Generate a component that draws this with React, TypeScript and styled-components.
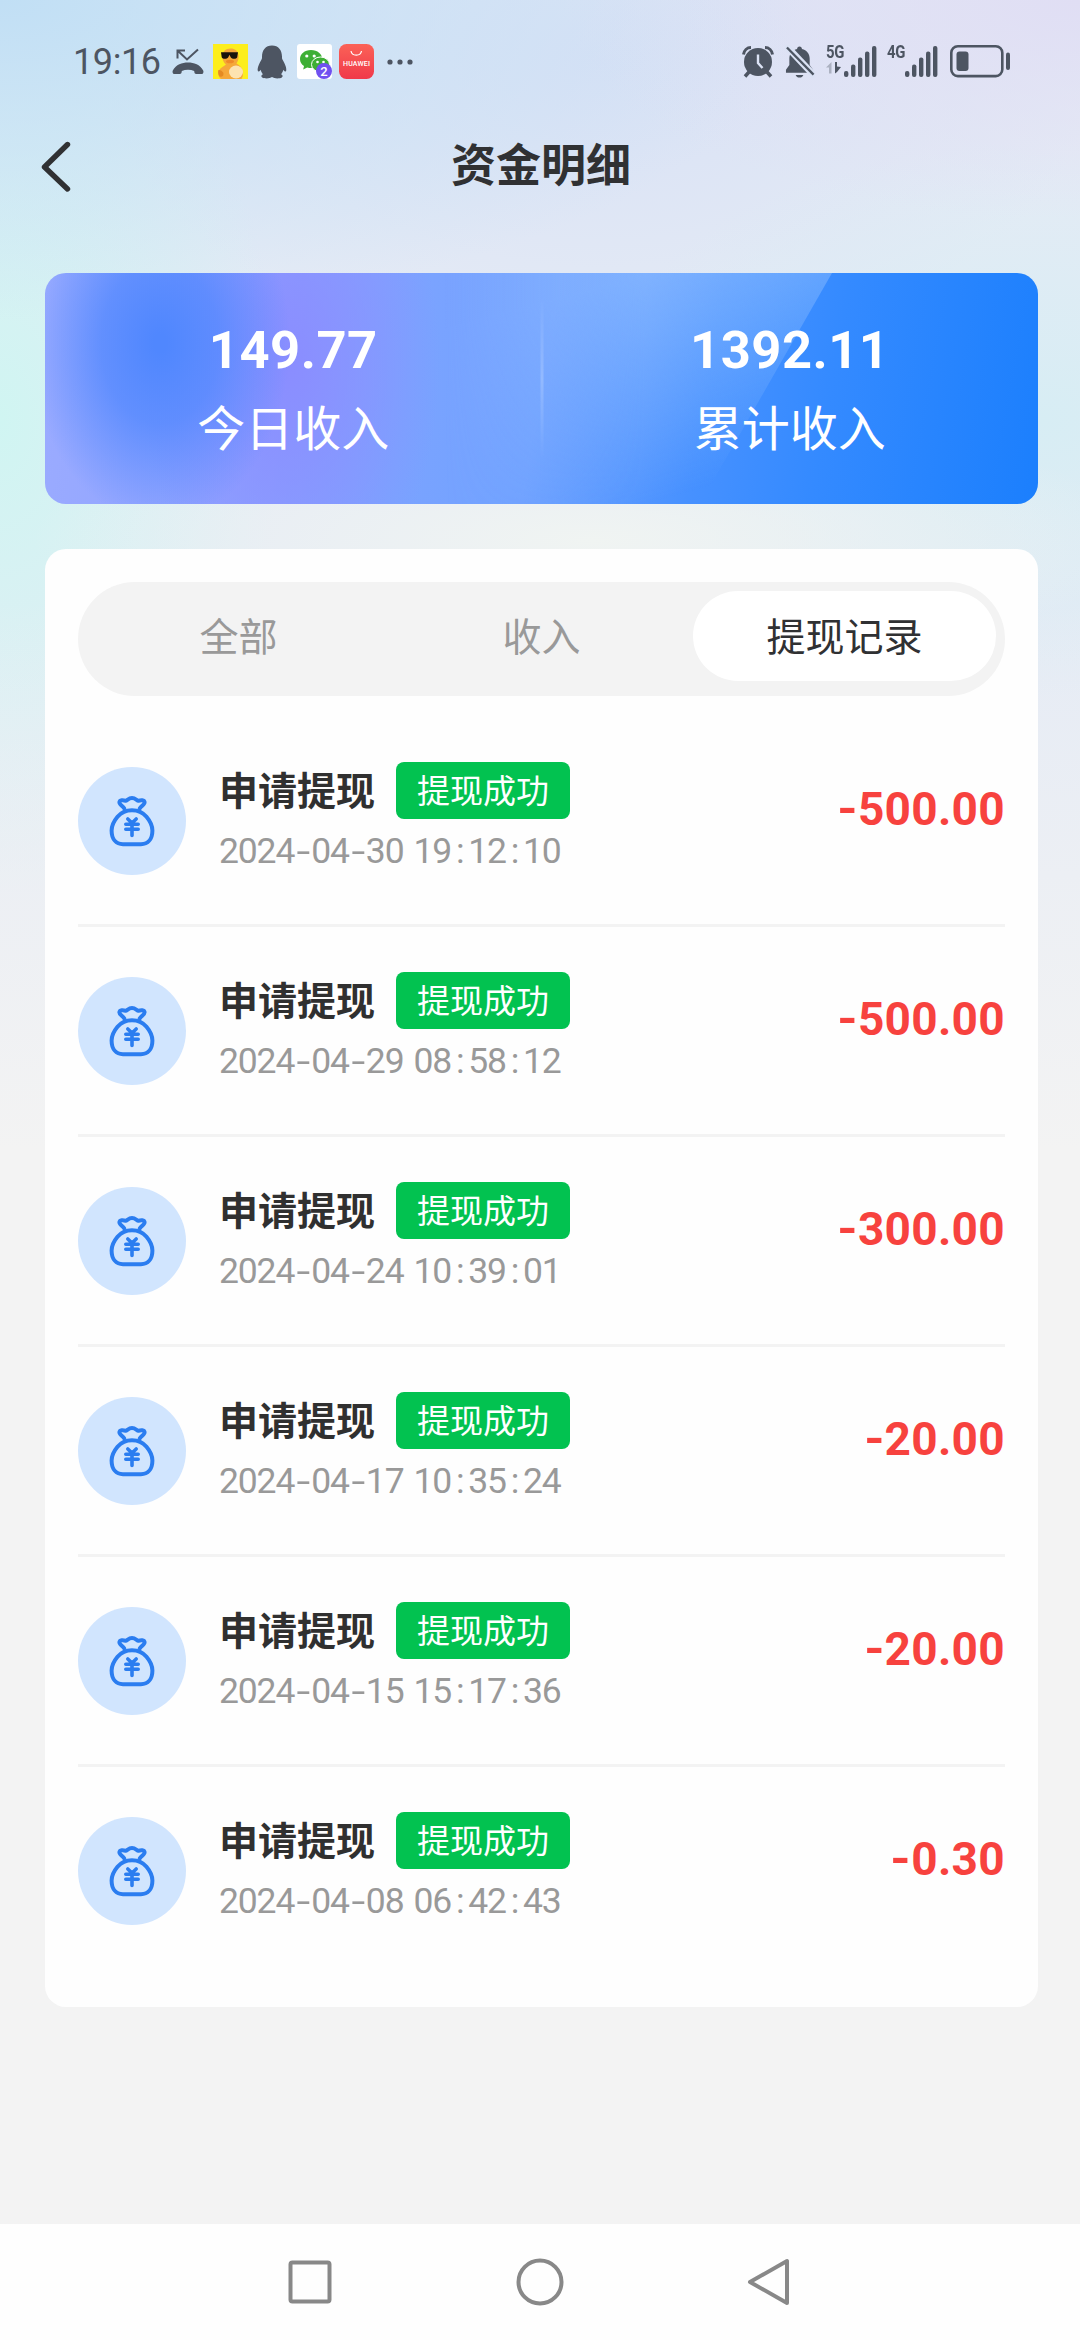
import React from "react";
import styled, { createGlobalStyle } from "styled-components";

const cjk = '"Noto Sans CJK SC", sans-serif';
const num = 'Roboto, "Noto Sans CJK SC", sans-serif';
const ink = "#4d5562";

const GlobalStyle = createGlobalStyle`
  * { box-sizing: border-box; }
  body { margin: 0; background: #f3f3f3; font-family: ${cjk}; }
`;

const Screen = styled.div`
  width: 1080px;
  height: 2340px;
  display: flex;
  flex-direction: column;
  overflow: hidden;
  background:
    linear-gradient(180deg, rgba(243, 243, 243, 0) 600px, #f3f3f3 1150px),
    radial-gradient(ellipse 560px 130px at 590px 540px, rgba(240, 244, 242, 1), rgba(240, 244, 242, 0) 100%),
    radial-gradient(ellipse 800px 320px at 0 0, rgba(193, 223, 245, 1), rgba(193, 223, 245, 0) 100%),
    radial-gradient(ellipse 280px 480px at 0 420px, rgba(208, 245, 242, 1), rgba(208, 245, 242, 0) 100%),
    radial-gradient(ellipse 520px 220px at 1080px 0, rgba(224, 222, 244, 1), rgba(224, 222, 244, 0) 100%),
    radial-gradient(ellipse 460px 280px at 1040px 420px, rgba(215, 237, 244, 1), rgba(215, 237, 244, 0) 100%),
    radial-gradient(ellipse 500px 300px at 600px 60px, rgba(216, 225, 245, 1), rgba(216, 225, 245, 0) 100%),
    #e5ebf5;
`;

const StatusBar = styled.header`
  height: 123px;
  padding: 0 69px 0 73px;
  display: flex;
  align-items: center;
  justify-content: space-between;
`;

const StatusGroup = styled.div`
  display: flex;
  align-items: center;
`;

const Clock = styled.span`
  width: 90px;
  font: 400 36px/40px ${num};
  letter-spacing: -0.4px;
  color: ${ink};
`;

const Glyph = styled.svg<{ $gap: number }>`
  display: block;
  flex: none;
  margin-left: ${(p) => p.$gap}px;
`;

const SignalBox = styled.div<{ $gap: number }>`
  display: flex;
  align-items: flex-start;
  height: 33px;
  margin-left: ${(p) => p.$gap}px;
`;

const Network = styled.div`
  width: 18px;
  display: flex;
  flex-direction: column;
`;

const NetworkLabel = styled.span`
  height: 18px;
  margin-top: -2px;
  font: 700 18px/18px ${num};
  letter-spacing: -0.3px;
  transform: scaleX(0.83);
  transform-origin: left center;
  color: ${ink};
`;

const TitleBar = styled.div`
  height: 150px;
  padding: 0 40px 65px;
  display: grid;
  grid-template-columns: 40px 1fr 40px;
  align-items: center;
`;

const PageTitle = styled.h1`
  margin: 0;
  padding: 0 0 6px 2px;
  text-align: center;
  font: 700 45px/60px ${cjk};
  color: #303133;
`;

const Summary = styled.section`
  position: relative;
  flex: none;
  width: 993px;
  height: 231px;
  margin-left: 45px;
  display: grid;
  grid-template-columns: 1fr 1fr;
  border-radius: 21px;
  overflow: hidden;
  background:
    radial-gradient(ellipse 130px 180px at 115px 70px, rgba(80, 135, 254, 1) 5%, rgba(80, 135, 254, 0.75) 45%, rgba(80, 135, 254, 0) 100%),
    radial-gradient(ellipse 150px 260px at 245px 90px, rgba(138, 141, 255, 1), rgba(138, 141, 255, 0) 100%),
    linear-gradient(100deg, #9cacff 0%, #8ba0ff 25%, #7ba3ff 37%, #70a2ff 50%, #4791ff 66%, #348aff 78%, #1b7ffd 100%);
`;

const Sheen = styled.svg`
  position: absolute;
  inset: 0;
`;

const Stat = styled.div`
  position: relative;
  padding-top: 47px;
  display: flex;
  flex-direction: column;
  align-items: center;
  color: #fff;
`;

const StatValue = styled.span`
  font: 700 52.5px/60px ${num};
  letter-spacing: 0.5px;
`;

const StatLabel = styled.span`
  margin-top: 11px;
  font: 400 48px/68px ${cjk};
`;

const Panel = styled.main`
  flex: none;
  width: 993px;
  height: 1458px;
  margin: 45px 0 0 45px;
  padding: 33px 33px 30px 33px;
  border-radius: 21px;
  background: #fefefe;
`;

const Tabs = styled.nav`
  height: 114px;
  margin-bottom: 21px;
  padding: 9px 9px 15px;
  display: grid;
  grid-template-columns: repeat(3, 1fr);
  border-radius: 57px;
  background: #f3f3f3;
`;

const Tab = styled.div<{ $active: boolean }>`
  padding-bottom: 4px;
  display: flex;
  align-items: center;
  justify-content: center;
  border-radius: 45px;
  font: 400 39px/56px ${cjk};
  color: ${(p) => (p.$active ? "#303133" : "#999")};
  background: ${(p) => (p.$active ? "#fff" : "transparent")};
`;

const Row = styled.div<{ $last: boolean }>`
  height: 210px;
  padding-top: 45px;
  display: flex;
  align-items: flex-start;
  border-bottom: 3px solid ${(p) => (p.$last ? "transparent" : "#f3f3f3")};
`;

const Avatar = styled.div`
  flex: none;
  width: 108px;
  height: 108px;
  margin: 5px 33px 0 0;
  display: flex;
  align-items: center;
  justify-content: center;
  border-radius: 50%;
  background: #d1e5fe;
`;

const Info = styled.div`
  flex: 1;
`;

const Heading = styled.div`
  display: flex;
  align-items: center;
  gap: 21px;
`;

const Name = styled.span`
  height: 57px;
  font: 700 39px/52px ${cjk};
  color: #303030;
`;

const Badge = styled.span`
  height: 57px;
  padding: 0 21px;
  border-radius: 8px;
  font: 400 33px/54px ${cjk};
  color: #fff;
  background: #02c250;
`;

const Stamp = styled.div`
  margin-top: 11px;
  font: 400 35.5px/42px ${num};
  letter-spacing: -1.15px;
  color: #999;
  white-space: pre;
`;

const Mark = styled.span<{ $w: number; $stretch?: number }>`
  display: inline-block;
  width: ${(p) => p.$w}px;
  text-align: center;
  transform: scaleX(${(p) => p.$stretch ?? 1});
`;

const Amount = styled.span`
  margin-top: 20px;
  font: 700 46px/54px ${num};
  letter-spacing: 0.3px;
  color: #f7423e;
`;

const NavBar = styled.footer`
  height: 116px;
  margin-top: auto;
  display: flex;
  justify-content: center;
  align-items: center;
  gap: 182px;
  background: #fefefe;
`;

const MissedCall = () => (
  <Glyph $gap={9} width="32" height="28" viewBox="0 0 32 28" fill="none">
    <path d="M5.500 10.500V2.500H13M5.500 2.500l9.500 9L26 1.500" stroke={ink} strokeWidth="2" />
    <path d="M.8 22.500C4 16.500 10 14.500 16 14.500s12 2 15.200 8c.6 1.400.2 3-1 3.600h-6c-1.400-.4-1.900-1.400-2-3.200-3.600-1.500-8.800-1.500-12.400 0-.1 1.800-.6 2.800-2 3.200h-6C.6 25.500.2 23.900.8 22.500z" fill={ink} />
  </Glyph>
);

const Duck = () => (
  <Glyph $gap={9} width="35" height="35" viewBox="0 0 35 35">
    <rect width="35" height="35" fill="#fdee1c" />
    <path d="M8 35c-4-3-3-9 0-11l5-3.500C7.500 16 8 4.500 17.500 4.500S27 15 23.500 19.500C29 22 32 29 28.500 35z" fill="#f5a83a" />
    <path d="M5.500 26c2 0 5 1.500 5 4s-2 3-3.500 2.500S4.500 28 5.500 26z" fill="#e58a22" />
    <ellipse cx="23" cy="28" rx="7" ry="6.500" fill="#fde3b0" />
    <ellipse cx="17" cy="17.500" rx="4" ry="1.800" fill="#ee8a28" />
    <path d="M8 8.300h17l-.8 5c-1 2-5 2-6.500 0l-1.200-2.500-1.200 2.500c-1.500 2-5.500 2-6.600 0z" fill="#17130c" />
  </Glyph>
);

const Penguin = () => (
  <Glyph $gap={9} width="30" height="34" viewBox="0 0 30 34" fill={ink}>
    <path d="M15 .5c6.500 0 10 4.800 10 11.200 0 1.400 0 2 .6 3 2.300 3.800 4.200 8.200 3.600 11-.4 1.400-1.700.9-2.900-1-.5 2-1.200 3.300-2.200 4.500 1.800.9 2 2.300.7 3.300-2.200 1.300-7.600 1.200-9.800-.4-2.200 1.600-7.600 1.700-9.800.4-1.300-1-1.100-2.400.7-3.300-1-1.200-1.700-2.500-2.200-4.500-1.200 1.900-2.500 2.400-2.900 1-.6-2.800 1.300-7.200 3.600-11 .6-1 .6-1.600.6-3C5 5.300 8.500.5 15 .5z" />
  </Glyph>
);

const WeChat = () => (
  <Glyph $gap={10} width="35" height="35" viewBox="0 0 35 35">
    <rect width="35" height="35" rx="3" fill="#fff" />
    <path d="M14 6C7.500 6 3 10 3 15c0 3 1.500 5.400 4 7l-.8 3.500 4-2c8 2 15-2 15-8.500C25.200 10 20.500 6 14 6z" fill="#3eaf35" />
    <ellipse cx="23.500" cy="20.500" rx="9" ry="7.500" fill="#3eaf35" stroke="#fff" strokeWidth="1" />
    <circle cx="9.800" cy="12" r="1.600" fill="#fff" />
    <circle cx="17.200" cy="12" r="1.600" fill="#fff" />
    <circle cx="20.500" cy="18" r="1.300" fill="#fff" />
    <circle cx="26.500" cy="18" r="1.300" fill="#fff" />
    <circle cx="27" cy="27" r="8" fill="#7051f0" />
    <text x="27" y="31.500" textAnchor="middle" fontFamily="Roboto" fontSize="13" fontWeight="500" fill="#fff">2</text>
  </Glyph>
);

const Huawei = () => (
  <Glyph $gap={7} width="35" height="35" viewBox="0 0 35 35">
    <defs>
      <linearGradient id="hw" x1="0" y1="0" x2="0" y2="1">
        <stop offset="0" stopColor="#fb6257" />
        <stop offset="1" stopColor="#f0394a" />
      </linearGradient>
    </defs>
    <rect width="35" height="35" rx="7.500" fill="url(#hw)" />
    <path d="M12 7c.8 5.500 9.700 5.500 10.500 0" fill="none" stroke="#fff" strokeWidth="1.200" />
    <text x="17.500" y="22.400" textAnchor="middle" fontFamily="Roboto" fontSize="7" fontWeight="500" textLength="27" fill="#fff">HUAWEI</text>
  </Glyph>
);

const More = () => (
  <Glyph $gap={12} width="28" height="8" viewBox="0 0 28 8" fill={ink}>
    <circle cx="4" cy="4" r="2.600" />
    <circle cx="14" cy="4" r="2.600" />
    <circle cx="24" cy="4" r="2.600" />
  </Glyph>
);

const Alarm = () => (
  <Glyph $gap={0} width="32" height="32" viewBox="0 0 32 32" fill="none">
    <path d="M1.500 8.500C2 4.500 5 1.500 9 1.500M30.500 8.500C30 4.500 27 1.500 23 1.500" stroke={ink} strokeWidth="3" />
    <circle cx="16" cy="16" r="14" fill={ink} />
    <path d="M7 26l-4 4.500M25 26l4 4.500" stroke={ink} strokeWidth="3.500" />
    <path d="M16 8.500V17l4.500 5" stroke="#dce3f5" strokeWidth="2.400" />
  </Glyph>
);

const Muted = () => (
  <Glyph $gap={11} width="30" height="34" viewBox="0 0 31 34">
    <path d="M15 1c1.500 0 2.500 1 2.500 2.500 5 1 8 5 8 10V20l3.500 5v3H1v-3l3.500-5v-6.500c0-5 3-9 8-10C12.500 2 13.500 1 15 1z" fill={ink} />
    <path d="M11 30.500h8c-1 3.500-7 3.500-8 0z" fill={ink} />
    <path d="M0 -1L31 32" stroke="#dbe2f4" strokeWidth="7" />
    <path d="M2 2L29.500 30" stroke={ink} strokeWidth="2.400" />
  </Glyph>
);

const Signal = ({ label, data, gap }: { label: string; data: boolean; gap: number }) => (
  <SignalBox $gap={gap}>
    <Network>
      <NetworkLabel>{label}</NetworkLabel>
      {data && (
        <Glyph $gap={0} width="16" height="13" viewBox="0 0 16 13" fill={ink}>
          <path d="M0 6.500L5.500 1v11.500H3V6.500z" opacity=".35" />
          <path d="M9 1h2v4.500l4 .5-4 5-2 1.500z" />
        </Glyph>
      )}
    </Network>
    <Glyph $gap={0} width="33" height="33" viewBox="0 0 33 33" fill={ink}>
      {[6, 12.5, 19.5, 25.5, 31].map((h, i) => (
        <rect key={h} x={i * 7} y={32 - h} width="4.400" height={h} rx="2" />
      ))}
    </Glyph>
  </SignalBox>
);

const Battery = () => (
  <Glyph $gap={12} width="61" height="33" viewBox="0 0 61 33">
    <rect x="1.300" y="1.300" width="51" height="29.800" rx="6.500" fill="none" stroke={ink} strokeWidth="2.600" />
    <rect x="6.500" y="6.500" width="12" height="19.500" rx="3" fill={ink} />
    <rect x="56" y="7.500" width="4" height="17.500" rx="2" fill={ink} />
  </Glyph>
);

const BackArrow = () => (
  <svg width="32" height="52" viewBox="0 0 32 52" fill="none">
    <path d="M27.500 4.500L4.500 27l23 22" stroke="#303133" strokeWidth="5.400" strokeLinecap="round" strokeLinejoin="round" />
  </svg>
);

const MoneyBag = () => (
  <svg width="54" height="54" viewBox="0 0 54 54" fill="none" stroke="#2b7df0" strokeWidth="4" strokeLinecap="round" strokeLinejoin="round">
    <path d="M19.300 14.500C17.800 12 14 10.300 14.400 8.200c.5-2.400 3.600-2.200 6.200-1.500 1.500-.2 3-2.700 6.400-2.700s4.900 2.500 6.400 2.700c2.600-.7 5.700-.9 6.200 1.500.4 2.100-3.400 3.800-4.900 6.300" />
    <path d="M27 16.300c-6.800 0-10.800 2.200-14.500 6.500C9 27 6.600 31.500 6.600 36.500c0 8.500 4.500 13.700 11.400 13.700h18c6.900 0 11.400-5.200 11.400-13.700 0-5-2.400-9.500-5.900-13.700-3.700-4.300-7.700-6.500-14.500-6.500z" />
    <path d="M22.800 25l4.200 4 4.200-4M27 29v12.500M20.800 30.300h12.400M20.800 35.300h12.400" strokeWidth="3.600" />
  </svg>
);

const rows = [
  { date: "2024-04-30", time: "19:12:10", amount: "-500.00" },
  { date: "2024-04-29", time: "08:58:12", amount: "-500.00" },
  { date: "2024-04-24", time: "10:39:01", amount: "-300.00" },
  { date: "2024-04-17", time: "10:35:24", amount: "-20.00" },
  { date: "2024-04-15", time: "15:17:36", amount: "-20.00" },
  { date: "2024-04-08", time: "06:42:43", amount: "-0.30" },
];

const markWidth: Record<string, number> = { "-": 17, ":": 17.2, " ": 10 };

const DateText = ({ value }: { value: string }) => (
  <Stamp>
    {value.split(/([-: ])/).map((part, i) =>
      part in markWidth ? (
        <Mark key={i} $w={markWidth[part]} $stretch={part === "-" ? 1.4 : 1}>{part}</Mark>
      ) : (
        part
      )
    )}
  </Stamp>
);

export default function App() {
  return (
    <Screen>
      <GlobalStyle />
      <StatusBar>
        <StatusGroup>
          <Clock>19:16</Clock>
          <MissedCall />
          <Duck />
          <Penguin />
          <WeChat />
          <Huawei />
          <More />
        </StatusGroup>
        <StatusGroup>
          <Alarm />
          <Muted />
          <Signal label="5G" data gap={11} />
          <Signal label="4G" data={false} gap={10} />
          <Battery />
        </StatusGroup>
      </StatusBar>
      <TitleBar>
        <BackArrow />
        <PageTitle>资金明细</PageTitle>
      </TitleBar>
      <Summary>
        <Sheen width="993" height="231" viewBox="0 0 993 231">
          <defs>
            <linearGradient id="sheen" x1="600" y1="0" x2="660" y2="215" gradientUnits="userSpaceOnUse">
              <stop offset="0" stopColor="#a5cbff" stopOpacity=".5" />
              <stop offset="1" stopColor="#a5cbff" stopOpacity="0" />
            </linearGradient>
            <linearGradient id="fade" x1="400" y1="0" x2="600" y2="0" gradientUnits="userSpaceOnUse">
              <stop offset="0" stopColor="#fff" stopOpacity="0" />
              <stop offset="1" stopColor="#fff" />
            </linearGradient>
            <linearGradient id="rule" x1="0" y1="0" x2="0" y2="1">
              <stop offset="0" stopColor="#fff" stopOpacity="0" />
              <stop offset=".5" stopColor="#fff" stopOpacity=".2" />
              <stop offset="1" stopColor="#fff" stopOpacity="0" />
            </linearGradient>
            <mask id="soft">
              <rect width="993" height="231" fill="url(#fade)" />
            </mask>
          </defs>
          <path d="M380 0H787L655 231H380z" fill="url(#sheen)" mask="url(#soft)" />
          <rect x="495.500" y="24" width="3" height="162" fill="url(#rule)" />
        </Sheen>
        <Stat>
          <StatValue>149.77</StatValue>
          <StatLabel>今日收入</StatLabel>
        </Stat>
        <Stat>
          <StatValue>1392.11</StatValue>
          <StatLabel>累计收入</StatLabel>
        </Stat>
      </Summary>
      <Panel>
        <Tabs>
          <Tab $active={false}>全部</Tab>
          <Tab $active={false}>收入</Tab>
          <Tab $active>提现记录</Tab>
        </Tabs>
        {rows.map((r, i) => (
          <Row key={r.date} $last={i === rows.length - 1}>
            <Avatar>
              <MoneyBag />
            </Avatar>
            <Info>
              <Heading>
                <Name>申请提现</Name>
                <Badge>提现成功</Badge>
              </Heading>
              <DateText value={`${r.date} ${r.time}`} />
            </Info>
            <Amount>
              <Mark $w={21} $stretch={1.12}>-</Mark>
              {r.amount.slice(1)}
            </Amount>
          </Row>
        ))}
      </Panel>
      <NavBar>
        <svg width="48" height="48" viewBox="0 0 48 48" fill="none" stroke="#888" strokeWidth="4">
          <rect x="4.500" y="4.500" width="39" height="39" rx="2" />
        </svg>
        <svg width="48" height="48" viewBox="0 0 48 48" fill="none" stroke="#888" strokeWidth="4">
          <circle cx="24" cy="24" r="21.500" />
        </svg>
        <svg width="48" height="48" viewBox="0 0 48 48" fill="none" stroke="#888" strokeWidth="4" strokeLinejoin="round">
          <path d="M41 3v42L4 24z" />
        </svg>
      </NavBar>
    </Screen>
  );
}
